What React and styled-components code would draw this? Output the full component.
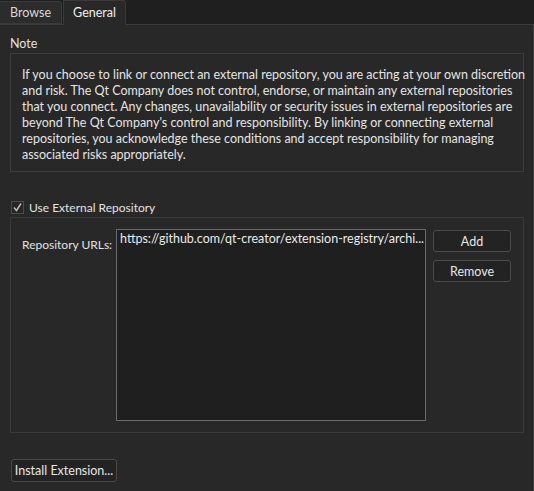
import React from "react";
import styled, { createGlobalStyle } from "styled-components";

const Global = createGlobalStyle`
  html, body { margin: 0; padding: 0; background: #282828; }
  body { font-family: "Lato", "Noto Sans", "DejaVu Sans", sans-serif; font-size: 12.5px; color: #e2e2e2; }
`;

const Window = styled.div`
  width: 534px;
  height: 491px;
  display: flex;
  flex-direction: column;
  overflow: hidden;
`;

const TabBar = styled.div`
  height: 24px;
  background: #1f1f1f;
  display: flex;
  align-items: flex-end;
  border-bottom: 1px solid #3a3a3a;
  position: relative;
`;

const Tab = styled.div`
  box-sizing: border-box;
  height: ${p => (p.$active ? "25px" : "23px")};
  margin-bottom: ${p => (p.$active ? "-1px" : "0")};
  width: ${p => p.$w}px;
  margin-right: 1px;
  background: ${p => (p.$active ? "#282828" : "#2c2c2c")};
  border: 1px solid #3a3a3a;
  border-bottom: ${p => (p.$active ? "none" : "1px solid #3a3a3a")};
  border-left: ${p => (p.$first ? "none" : "1px solid #3a3a3a")};
  border-radius: 0 3px 0 0;
  color: ${p => (p.$active ? "#f0f0f0" : "#d8d8d8")};
  display: flex;
  align-items: center;
  justify-content: center;
  padding-bottom: ${p => (p.$active ? "2px" : "0")};
  position: relative;
  z-index: 1;
`;

const Pane = styled.div`
  flex: 1;
  background: #282828;
  border-right: 1px solid #3a3a3a;
  padding: 11px 10px 0 10px;
  display: flex;
  flex-direction: column;
`;

const SectionLabel = styled.div`
  line-height: 16px;
  height: 16px;
  color: #e2e2e2;
`;

const NoteBox = styled.div`
  margin-top: 1px;
  width: 514px;
  box-sizing: border-box;
  border: 1px solid #3c3c3c;
  padding: 13px 6px 8px 11px;
  line-height: 16px;
  font-size: 12.5px;
  color: #e4e4e4;
`;

const Line = styled.div`
  white-space: nowrap;
`;

const CheckRow = styled.label`
  margin-top: 28px;
  display: flex;
  align-items: center;
  height: 14px;
  gap: 5px;
  padding-left: 1px;
  font-size: 12px;
`;

const CheckBox = styled.span`
  width: 13px;
  height: 13px;
  box-sizing: border-box;
  border: 1px solid #4c4c4c;
  background: #262626;
  display: flex;
  align-items: center;
  justify-content: center;
`;

const Group = styled.div`
  margin-top: 3px;
  width: 514px;
  height: 216px;
  box-sizing: border-box;
  border: 1px solid #3a3a3a;
  display: flex;
  padding: 11px 11px 0 11px;
`;

const FieldLabel = styled.div`
  width: 94px;
  padding-top: 8px;
  line-height: 16px;
  white-space: nowrap;
  font-size: 12px;
`;

const UrlList = styled.div`
  width: 310px;
  height: 192px;
  box-sizing: border-box;
  background: #1f1f1f;
  border: 1px solid #6a6a6a;
  padding: 1px 3px;
  line-height: 16px;
  white-space: nowrap;
  overflow: hidden;
  color: #eaeaea;
`;

const Buttons = styled.div`
  margin-left: 7px;
  padding-top: 1px;
  display: flex;
  flex-direction: column;
  gap: 8px;
`;

const Button = styled.button`
  box-sizing: border-box;
  width: ${p => p.$w}px;
  height: ${p => p.$h || 22}px;
  background: #232323;
  border: 1px solid #4a4a4a;
  border-radius: 3px;
  color: #e6e6e6;
  font-family: inherit;
  font-size: 12.5px;
  padding: 0;
  display: flex;
  align-items: center;
  justify-content: center;
`;

const Footer = styled.div`
  margin-top: 26px;
  padding-left: 1px;
`;

const noteLines = [
  "If you choose to link or connect an external repository, you are acting at your own discretion",
  "and risk. The Qt Company does not control, endorse, or maintain any external repositories",
  "that you connect. Any changes, unavailability or security issues in external repositories are",
  "beyond The Qt Company's control and responsibility. By linking or connecting external",
  "repositories, you acknowledge these conditions and accept responsibility for managing",
  "associated risks appropriately.",
];

export default function App() {
  return (
    <Window>
      <Global />
      <TabBar>
        <Tab $w={62} $first>Browse</Tab>
        <Tab $w={63} $active>General</Tab>
      </TabBar>
      <Pane>
        <SectionLabel>Note</SectionLabel>
        <NoteBox>
          {noteLines.map((l, i) => (
            <Line key={i}>{l}</Line>
          ))}
        </NoteBox>
        <CheckRow>
          <CheckBox>
            <svg width="11" height="11" viewBox="0 0 11 11">
              <path d="M2 5.5 L4.5 8.5 L9 1.5" fill="none" stroke="#bdbdbd" strokeWidth="1.4" />
            </svg>
          </CheckBox>
          <span>Use External Repository</span>
        </CheckRow>
        <Group>
          <FieldLabel>Repository URLs:</FieldLabel>
          <UrlList>https://github.com/qt-creator/extension-registry/archi...</UrlList>
          <Buttons>
            <Button $w={78}>Add</Button>
            <Button $w={78}>Remove</Button>
          </Buttons>
        </Group>
        <Footer>
          <Button $w={106} $h={23}>Install Extension...</Button>
        </Footer>
      </Pane>
    </Window>
  );
}
